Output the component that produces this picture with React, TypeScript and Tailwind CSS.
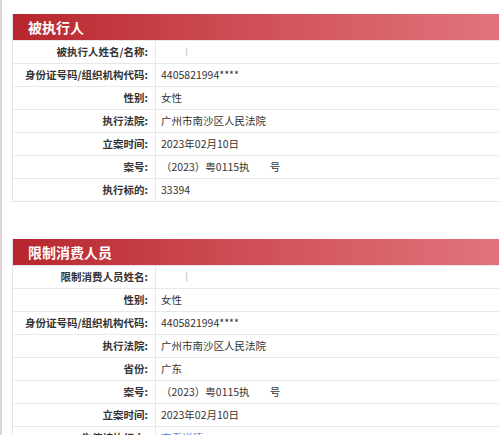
import React from 'react';

type Row = { label: string; value: React.ReactNode };

const FONT = { fontFamily: '"Noto Sans CJK SC", "Noto Sans", sans-serif' };

const blurName = (
  <span className="inline-block pl-[24px] text-[#c9c9c9]">l</span>
);

const caseNo = (
  <span>
    （2023）粤0115执<span className="inline-block w-[20px]" />号
  </span>
);

const section1: Row[] = [
  { label: '被执行人姓名/名称:', value: blurName },
  { label: '身份证号码/组织机构代码:', value: '4405821994****' },
  { label: '性别:', value: '女性' },
  { label: '执行法院:', value: '广州市南沙区人民法院' },
  { label: '立案时间:', value: '2023年02月10日' },
  { label: '案号:', value: caseNo },
  { label: '执行标的:', value: '33394' },
];

const section2: Row[] = [
  { label: '限制消费人员姓名:', value: blurName },
  { label: '性别:', value: '女性' },
  { label: '身份证号码/组织机构代码:', value: '4405821994****' },
  { label: '执行法院:', value: '广州市南沙区人民法院' },
  { label: '省份:', value: '广东' },
  { label: '案号:', value: caseNo },
  { label: '立案时间:', value: '2023年02月10日' },
  { label: '失信被执行人:', value: <span className="text-[#4a7bc4]">查看详情</span> },
];

function Section({ title, rows }: { title: string; rows: Row[] }) {
  return (
    <div className="border-l border-b border-[#e3e3e3]">
      <div className="h-[26px] flex items-center pl-[15px] bg-gradient-to-r from-[#b7252c] via-[#d04f58] to-[#e0747c]">
        <span className="text-white text-[14px] font-bold">{title}</span>
      </div>
      {rows.map((r, i) => (
        <div
          key={i}
          className="flex h-[23px] items-center border-t border-[#e8e8e8] first:border-t-0 text-[10.5px] text-[#333]"
        >
          <div className="w-[143px] shrink-0 h-full flex items-center justify-end pr-[7px] font-bold border-r border-[#e8e8e8]">
            {r.label}
          </div>
          <div className="pl-[5px] whitespace-nowrap">{r.value}</div>
        </div>
      ))}
    </div>
  );
}

export default function App() {
  return (
    <div className="w-[499px] h-[435px] overflow-hidden bg-white flex" style={FONT}>
      <div className="w-[2px] shrink-0 bg-[#dcd7d2]" />
      <div className="flex-1 pl-[10px] pt-[14px] flex flex-col gap-[37px]">
        <Section title="被执行人" rows={section1} />
        <Section title="限制消费人员" rows={section2} />
      </div>
    </div>
  );
}
